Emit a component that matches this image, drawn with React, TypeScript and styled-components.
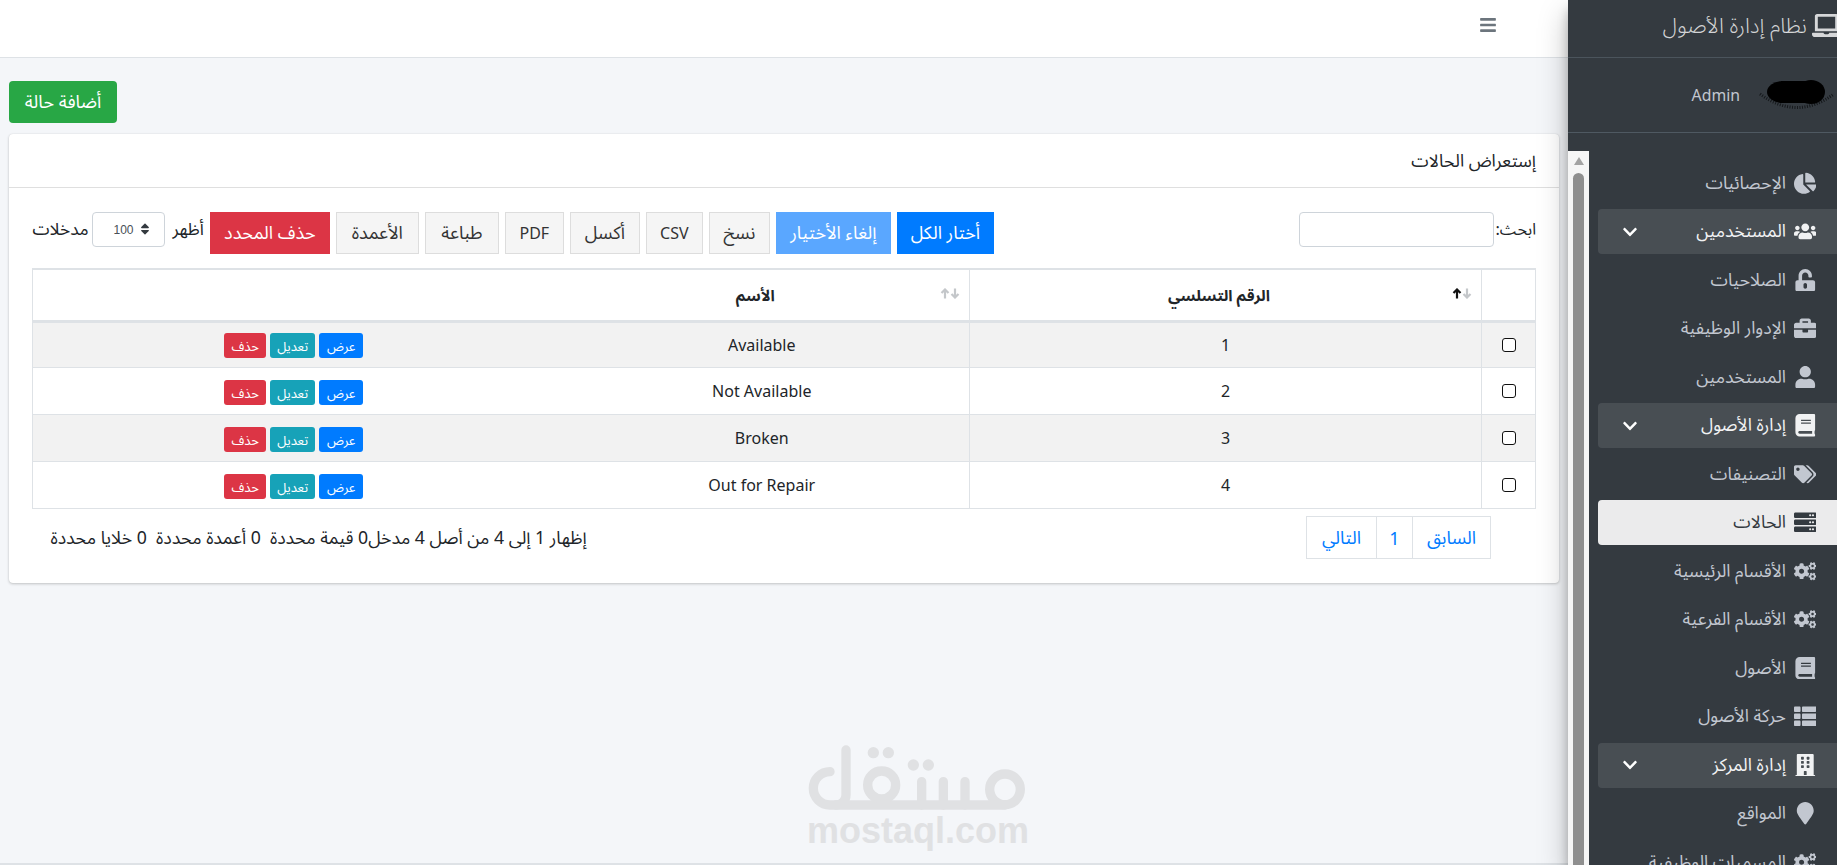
import React from 'react';
import styled, { createGlobalStyle } from 'styled-components';
import {
  FaBars, FaBook, FaBriefcase, FaBuilding, FaChartPie, FaChevronDown, FaCogs, FaLaptop,
  FaMapMarker, FaServer, FaSort, FaTags, FaThList, FaUnlockAlt, FaUser, FaUsers,
} from 'react-icons/fa';

const Global = createGlobalStyle`
  html, body { margin: 0; padding: 0; height: 100%; overflow: hidden; }
  body { font-family: "Noto Sans", "Noto Sans Arabic", "DejaVu Sans", sans-serif; font-size: 16px; color: #212529; background: #f4f6f9; }
  * { box-sizing: border-box; }
`;

const Shell = styled.div`
  display: flex;
  width: 1837px;
  height: 865px;
  overflow: hidden;
`;

const Sidebar = styled.aside`
  width: 269px;
  flex: none;
  height: 865px;
  background: #343a40;
  overflow: hidden;
  position: relative;
  z-index: 3;
  box-shadow: 0 14px 28px rgba(0,0,0,.25), 0 10px 10px rgba(0,0,0,.22);
`;

const Brand = styled.div`
  height: 58px;
  display: flex;
  align-items: center;
  gap: 5px;
  margin-right: -4px;
  padding-bottom: 6px;
  border-bottom: 1px solid #4b545c;
  color: rgba(255,255,255,.8);
  font-size: 21.5px;
  font-weight: 300;
  svg { font-size: 29px; flex: none; }
`;

const UserPanel = styled.div`
  height: 75px;
  display: flex;
  align-items: center;
  gap: 19px;
  padding-right: 2px;
  border-bottom: 1px solid #4f5962;
  color: #c2c7d0;
  font-size: 15.8px;
`;

const Blob = styled.svg`
  width: 76px;
  height: 32px;
  flex: none;
`;

const SideBody = styled.div`
  display: flex;
  height: 733px;
`;

const Rail = styled.div`
  width: 21px;
  flex: none;
  margin-top: 18px;
  background: #f6f6f6;
  display: flex;
  flex-direction: column;
  align-items: center;
`;

const RailArrow = styled.div`
  width: 0;
  height: 0;
  margin-top: 6px;
  border-left: 5.5px solid transparent;
  border-right: 5.5px solid transparent;
  border-bottom: 8px solid #a3a3a3;
`;

const RailThumb = styled.div`
  width: 11px;
  flex: 1;
  margin-top: 8px;
  background: #8f8f8f;
  border-radius: 5.5px 5.5px 0 0;
`;

const Nav = styled.nav`
  flex: 1;
  min-width: 0;
  padding: 27.5px 0 0 0;
  display: flex;
  flex-direction: column;
  gap: 3.5px;
  overflow: hidden;
`;

const NavItem = styled.div<{ $kind?: 'open' | 'active' }>`
  height: 45px;
  flex: none;
  margin-left: 9px;
  display: flex;
  align-items: center;
  padding-right: 18px;
  border-radius: 4px 0 0 4px;
  font-size: 17.6px;
  color: ${p => (p.$kind === 'active' ? '#343a40' : p.$kind === 'open' ? '#f1f2f3' : '#c2c7d0')};
  background: ${p => (p.$kind === 'active' ? 'rgba(255,255,255,.9)' : p.$kind === 'open' ? 'rgba(255,255,255,.1)' : 'transparent')};
`;

const NavIcon = styled.span`
  width: 28px;
  flex: none;
  margin-left: 5px;
  display: flex;
  justify-content: center;
  svg { height: 22.5px; width: auto; flex: none; }
`;

const NavLabel = styled.span`
  flex: 1;
  white-space: nowrap;
`;

const Chevron = styled(FaChevronDown)`
  font-size: 16px;
  color: #fff;
  margin-left: 24px;
  flex: none;
`;

const Main = styled.main`
  flex: 1;
  min-width: 0;
  height: 865px;
  position: relative;
  display: flex;
  flex-direction: column;
  border-bottom: 2px solid #dee2e6;
`;

const Topbar = styled.header`
  height: 58px;
  flex: none;
  background: #fff;
  border-bottom: 1px solid #dee2e6;
  display: flex;
  align-items: center;
  padding: 0 71px 7px 0;
  color: #6c757d;
  font-size: 18px;
`;

const Content = styled.div`
  padding: 23px 9px 0;
`;

const AddRow = styled.div`
  display: flex;
  justify-content: flex-end;
  margin-bottom: 11px;
`;

const AddButton = styled.button`
  width: 108px;
  height: 42px;
  border: 0;
  border-radius: 4px;
  background: #28a745;
  color: #fff;
  font: inherit;
  font-size: 18px;
`;

const Card = styled.section`
  background: #fff;
  border-radius: 4px;
  box-shadow: 0 0 1px rgba(0,0,0,.125), 0 1px 3px rgba(0,0,0,.2);
  height: 449px;
`;

const CardHeader = styled.h2`
  margin: 0;
  height: 54px;
  display: flex;
  align-items: center;
  padding: 1px 23px 0;
  border-bottom: 1px solid rgba(0,0,0,.125);
  font-size: 17.6px;
  font-weight: 400;
`;

const CardBody = styled.div`
  padding: 24px 23px 24px 23.5px;
`;

const Toolbar = styled.div`
  display: flex;
  justify-content: space-between;
  align-items: flex-start;
  height: 56px;
`;

const Search = styled.label`
  display: flex;
  align-items: center;
  height: 35px;
  gap: 1px;
  font-size: 16.2px;
`;

const SearchInput = styled.input`
  width: 195px;
  height: 35px;
  border: 1px solid #ced4da;
  border-radius: 4px;
  background: #fff;
`;

const Tools = styled.div`
  display: flex;
  align-items: flex-start;
  gap: 6px;
`;

const Btn = styled.button<{ $w: number; $tone?: 'blue' | 'soft' | 'red' }>`
  width: ${p => p.$w}px;
  height: 42px;
  padding: 0;
  font: inherit;
  font-size: 18px;
  border: 1px solid ${p => (p.$tone === 'blue' ? '#007bff' : p.$tone === 'soft' ? '#5aa7ff' : p.$tone === 'red' ? '#dc3545' : '#ddd')};
  background: ${p => (p.$tone === 'blue' ? '#007bff' : p.$tone === 'soft' ? '#5aa7ff' : p.$tone === 'red' ? '#dc3545' : '#f5f5f5')};
  color: ${p => (p.$tone ? '#fff' : '#333')};
`;

const LatinBtn = styled(Btn)`
  font-size: 16px;
`;

const LengthLabel = styled.label`
  display: flex;
  align-items: center;
  gap: 4px;
  height: 35px;
  font-size: 17.3px;
`;

const SelectWrap = styled.span`
  position: relative;
  display: block;
  width: 73px;
  height: 35px;
  margin-right: 3px;
  svg { position: absolute; right: 13px; top: 10px; font-size: 14px; color: #343a40; }
`;

const Select = styled.select`
  appearance: none;
  width: 100%;
  height: 100%;
  border: 1px solid #ced4da;
  border-radius: 4px;
  background: #fff;
  font-family: "Liberation Sans Narrow", "Liberation Sans", sans-serif;
  font-size: 12px;
  color: #495057;
  padding: 0 0 0 20px;
  direction: ltr;
`;

const Table = styled.table`
  width: 1503px;
  table-layout: fixed;
  border-collapse: collapse;
  border: 1px solid #dee2e6;
  border-top-width: 2px;
`;

const Th = styled.th<{ $bare?: boolean }>`
  position: relative;
  height: 52px;
  padding: 2px 13px 0 0;
  font-size: 15.5px;
  font-weight: 700;
  border-bottom: 3px solid #dee2e6;
  border-left: ${p => (p.$bare ? '0' : '1px solid #dee2e6')};
`;

const SortMark = styled.span`
  position: absolute;
  top: 18px;
  right: 9px;
  display: flex;
`;

const Tr = styled.tr<{ $odd: boolean }>`
  background: ${p => (p.$odd ? '#f2f2f2' : '#fff')};
`;

const Td = styled.td<{ $bare?: boolean }>`
  height: 46.9px;
  padding: 0;
  text-align: center;
  font-size: 16px;
  border-bottom: 1px solid #dee2e6;
  border-left: ${p => (p.$bare ? '0' : '1px solid #dee2e6')};
`;

const Check = styled.input`
  appearance: none;
  display: block;
  margin: 0 auto;
  width: 14px;
  height: 14px;
  border: 1.4px solid #111;
  border-radius: 3px;
  background: #fff;
`;

const Actions = styled.div`
  display: flex;
  justify-content: center;
  gap: 4px;
  margin-top: 2px;
`;

const Mini = styled.button<{ $w: number; $bg: string }>`
  width: ${p => p.$w}px;
  height: 25px;
  padding: 0;
  border: 0;
  border-radius: 3px;
  font: inherit;
  font-size: 13px;
  color: #fff;
  background: ${p => p.$bg};
`;

const Foot = styled.div`
  display: flex;
  justify-content: space-between;
  align-items: center;
  margin-top: 7px;
  padding: 0 45px 0 18px;
`;

const Pager = styled.div`
  display: flex;
  height: 43px;
  border: 1px solid #dee2e6;
`;

const Page = styled.a<{ $w: number }>`
  width: ${p => p.$w}px;
  display: flex;
  align-items: center;
  justify-content: center;
  color: #007bff;
  font-size: 18px;
  & + & { border-right: 1px solid #dee2e6; }
`;

const Info = styled.div`
  font-size: 17.7px;
  white-space: pre;
  padding-top: 2px;
`;

const Watermark = styled.div`
  position: absolute;
  left: 760px;
  top: 730px;
  width: 320px;
  direction: ltr;
  text-align: center;
  color: #e0e1e3;
  svg { display: block; }
`;

const WatermarkText = styled.div`
  margin: -6px 0 0 -4px;
  font-family: "Liberation Sans", sans-serif;
  font-weight: 700;
  font-size: 36px;
  line-height: 34px;
`;

const items: { icon: React.ReactNode; label: string; kind?: 'open' | 'active'; chevron?: boolean }[] = [
  { icon: <FaChartPie />, label: 'الإحصائيات' },
  { icon: <FaUsers />, label: 'المستخدمين', kind: 'open', chevron: true },
  { icon: <FaUnlockAlt />, label: 'الصلاحيات' },
  { icon: <FaBriefcase />, label: 'الإدوار الوظيفية' },
  { icon: <FaUser />, label: 'المستخدمين' },
  { icon: <FaBook />, label: 'إدارة الأصول', kind: 'open', chevron: true },
  { icon: <FaTags />, label: 'التصنيفات' },
  { icon: <FaServer />, label: 'الحالات', kind: 'active' },
  { icon: <FaCogs />, label: 'الأقسام الرئيسية' },
  { icon: <FaCogs />, label: 'الأقسام الفرعية' },
  { icon: <FaBook />, label: 'الأصول' },
  { icon: <FaThList />, label: 'حركة الأصول' },
  { icon: <FaBuilding />, label: 'إدارة المركز', kind: 'open', chevron: true },
  { icon: <FaMapMarker />, label: 'المواقع' },
  { icon: <FaCogs />, label: 'المسميات الوظيفية' },
];

const rows = ['Available', 'Not Available', 'Broken', 'Out for Repair'];

const SortIcon = ({ up, down }: { up: string; down: string }) => (
  <svg width="20" height="11" viewBox="0 0 20 11">
    <path d="M5 10.5V1.5M1.5 5L5 1.5L8.5 5" fill="none" stroke={up} strokeWidth="2.2" />
    <path d="M15 .5V9.5M11.5 6L15 9.5L18.5 6" fill="none" stroke={down} strokeWidth="2.2" />
  </svg>
);

export default function App() {
  return (
    <Shell dir="rtl">
      <Global />
      <Sidebar>
        <Brand><FaLaptop /><span>نظام إدارة الأصول</span></Brand>
        <UserPanel>
          <Blob viewBox="0 0 76 32">
            <path d="M1 15Q38 42 75 15" fill="none" stroke="#15181b" strokeWidth="3" strokeDasharray="1 1.5" />
            <ellipse cx="24" cy="13" rx="16" ry="11" fill="#000" />
            <ellipse cx="52" cy="13" rx="14" ry="12" fill="#000" />
            <rect x="22" y="2" width="30" height="22" fill="#000" />
          </Blob>
          <span>Admin</span>
        </UserPanel>
        <SideBody>
          <Nav>
            {items.map((it, i) => (
              <NavItem key={i} $kind={it.kind}>
                <NavIcon>{it.icon}</NavIcon>
                <NavLabel>{it.label}</NavLabel>
                {it.chevron && <Chevron />}
              </NavItem>
            ))}
          </Nav>
          <Rail><RailArrow /><RailThumb /></Rail>
        </SideBody>
      </Sidebar>
      <Main>
        <Topbar><FaBars /></Topbar>
        <Content>
          <AddRow><AddButton>أضافة حالة</AddButton></AddRow>
          <Card>
            <CardHeader>إستعراض الحالات</CardHeader>
            <CardBody>
              <Toolbar>
                <Search>ابحث:<SearchInput type="search" /></Search>
                <Tools>
                  <Btn $w={97} $tone="blue">أختار الكل</Btn>
                  <Btn $w={115} $tone="soft">إلغاء الأختيار</Btn>
                  <Btn $w={61}>نسخ</Btn>
                  <LatinBtn $w={57}>CSV</LatinBtn>
                  <Btn $w={70}>أكسل</Btn>
                  <LatinBtn $w={59}>PDF</LatinBtn>
                  <Btn $w={74}>طباعة</Btn>
                  <Btn $w={83}>الأعمدة</Btn>
                  <Btn $w={120} $tone="red">حذف المحدد</Btn>
                  <LengthLabel>
                    أظهر
                    <SelectWrap>
                      <Select defaultValue="100"><option value="100">100</option></Select>
                      <FaSort />
                    </SelectWrap>
                    مدخلات
                  </LengthLabel>
                </Tools>
              </Toolbar>
              <Table>
                <colgroup>
                  <col style={{ width: 54 }} />
                  <col style={{ width: 512 }} />
                  <col style={{ width: 415 }} />
                  <col style={{ width: 522 }} />
                </colgroup>
                <thead>
                  <tr>
                    <Th />
                    <Th>الرقم التسلسي<SortMark><SortIcon up="#111" down="#c4c7ca" /></SortMark></Th>
                    <Th $bare>الأسم<SortMark><SortIcon up="#c4c7ca" down="#c4c7ca" /></SortMark></Th>
                    <Th $bare />
                  </tr>
                </thead>
                <tbody>
                  {rows.map((name, i) => (
                    <Tr key={name} $odd={i % 2 === 0}>
                      <Td><Check type="checkbox" /></Td>
                      <Td>{i + 1}</Td>
                      <Td $bare>{name}</Td>
                      <Td $bare>
                        <Actions>
                          <Mini $w={44} $bg="#007bff">عرض</Mini>
                          <Mini $w={45} $bg="#17a2b8">تعديل</Mini>
                          <Mini $w={42} $bg="#dc3545">حذف</Mini>
                        </Actions>
                      </Td>
                    </Tr>
                  ))}
                </tbody>
              </Table>
              <Foot>
                <Pager>
                  <Page $w={77}>السابق</Page>
                  <Page $w={36}>1</Page>
                  <Page $w={70}>التالي</Page>
                </Pager>
                <Info>{'إظهار 1 إلى 4 من أصل 4 مدخل0 قيمة محددة  0 أعمدة محددة  0 خلايا محددة'}</Info>
              </Foot>
            </CardBody>
          </Card>
        </Content>
        <Watermark>
          <svg width="320" height="90" viewBox="0 0 960 270" fill="none" stroke="currentColor" strokeWidth="28" strokeLinecap="round">
            <circle cx="735" cy="178" r="46" />
            <path d="M258 60V195A30 30 0 0 1 228 225H210A50 50 0 0 1 210 125" />
            <path d="M228 225H735" />
            <circle cx="365" cy="165" r="42" />
            <path d="M485 225V155M550 225V155M615 225V155" />
            <g fill="currentColor" stroke="none">
              <circle cx="340" cy="68" r="17" />
              <circle cx="385" cy="68" r="17" />
              <circle cx="460" cy="105" r="17" />
              <circle cx="505" cy="105" r="17" />
            </g>
          </svg>
          <WatermarkText>mostaql.com</WatermarkText>
        </Watermark>
      </Main>
    </Shell>
  );
}
